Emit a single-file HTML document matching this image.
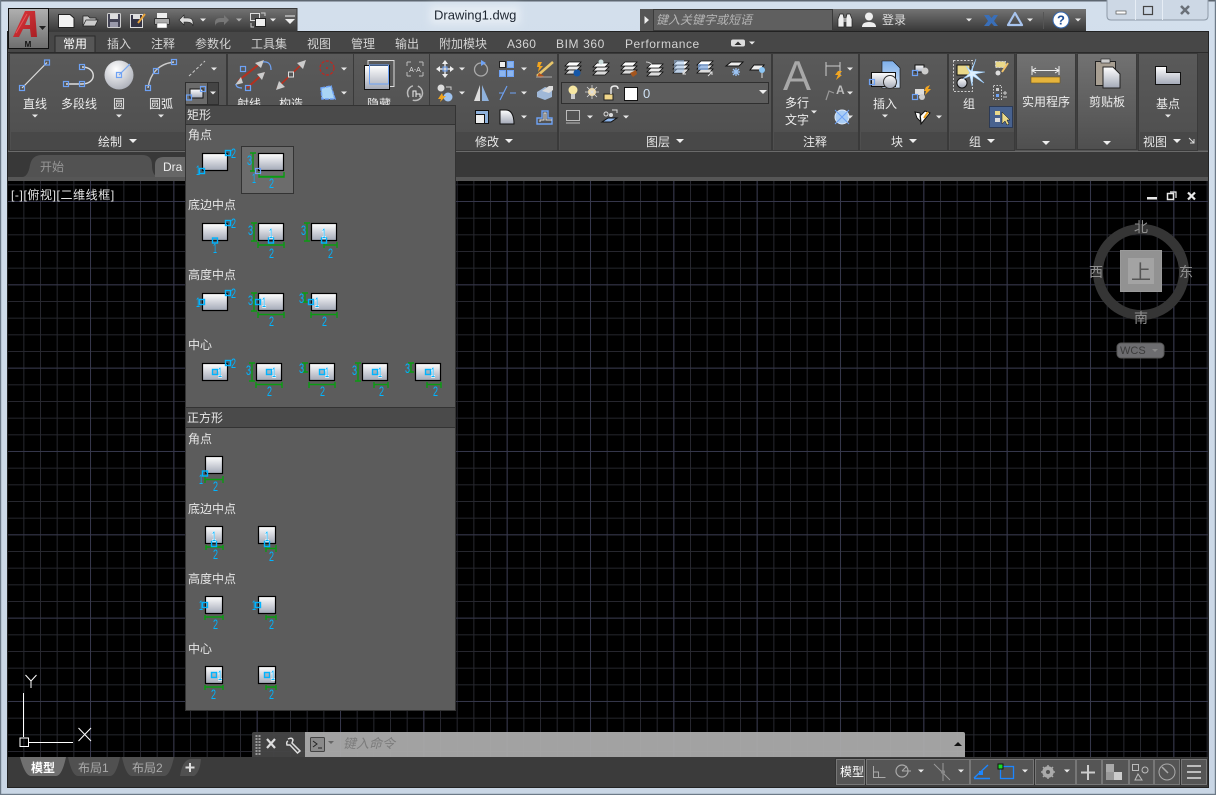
<!DOCTYPE html>
<html lang="zh"><head><meta charset="utf-8"><title>Drawing1.dwg</title>
<style>
html,body{margin:0;padding:0;background:#000;width:1216px;height:795px;overflow:hidden}
svg{display:block}
text{font-family:"Liberation Sans","Noto Sans CJK SC",sans-serif;font-size:12px;fill:#e6e6e6}
.c{text-anchor:middle}
.tab{fill:#d4d4d4}
.n{fill:#00b4ff;font-size:14px}
.w{paint-order:stroke;stroke:#eaf6ff;stroke-width:1.500px}
.g{fill:none;stroke:#0a9c12;stroke-width:1.400}
.lbl{fill:#ececec}
.vc{fill:#909090;font-size:14px;text-anchor:middle}
</style></head><body>
<svg width="1216" height="795" viewBox="0 0 1216 795" xmlns="http://www.w3.org/2000/svg">
<defs>
<linearGradient id="gT" x1="0" y1="0" x2="0" y2="1"><stop offset="0" stop-color="#d3dfec"/><stop offset="1" stop-color="#c9d6e5"/></linearGradient>
<linearGradient id="gQ" x1="0" y1="0" x2="0" y2="1"><stop offset="0" stop-color="#737373"/><stop offset="1" stop-color="#383838"/></linearGradient>
<linearGradient id="gA" x1="0" y1="0" x2="0" y2="1"><stop offset="0" stop-color="#b0b0b0"/><stop offset="1" stop-color="#6e6e6e"/></linearGradient>
<linearGradient id="gP" x1="0" y1="0" x2="0" y2="1"><stop offset="0" stop-color="#5a5a5a"/><stop offset="1" stop-color="#4e4e4e"/></linearGradient>
<linearGradient id="gL" x1="0" y1="0" x2="0" y2="1"><stop offset="0" stop-color="#727272"/><stop offset="1" stop-color="#4f4f4f"/></linearGradient>
<linearGradient id="gS" x1="0" y1="0" x2="0" y2="1"><stop offset="0" stop-color="#ffffff"/><stop offset="1" stop-color="#a3a9b7"/></linearGradient>
<linearGradient id="gB" x1="0" y1="0" x2="0" y2="1"><stop offset="0" stop-color="#7fb0ea"/><stop offset="1" stop-color="#cfe0f5"/></linearGradient>
<linearGradient id="gR" x1="0" y1="0" x2="1" y2="1"><stop offset="0" stop-color="#e0383c"/><stop offset="1" stop-color="#a81f24"/></linearGradient>
<radialGradient id="gC" cx=".4" cy=".3" r=".8"><stop offset="0" stop-color="#fff"/><stop offset="1" stop-color="#a5a9b3"/></radialGradient>
<filter id="bl" x="-20%" y="-50%" width="140%" height="200%"><feGaussianBlur stdDeviation="4"/></filter>
<pattern id="mi" x="6.67" y="1" width="16.667" height="16.667" patternUnits="userSpaceOnUse"><path d="M.5 0V16.667M0 .5H16.667" stroke="#26272e" stroke-width="1" fill="none"/></pattern>
<pattern id="ma" x="6.67" y="34.33" width="83.33" height="83.33" patternUnits="userSpaceOnUse"><path d="M.5 0V83.33M0 .5H83.33" stroke="#35364a" stroke-width="1" fill="none"/></pattern>
<path id="t" d="M-3-1.5H3L0 1.5Z" fill="#e8e8e8"/>
<path id="T" d="M-4-2H4L0 2Z" fill="#eee"/>
<rect id="p" x="-2.5" y="-2.5" width="5" height="5" fill="none" stroke="#6ea2f5" stroke-width="1.2"/>
<rect id="b" x="-2.5" y="-2.5" width="5" height="5" fill="#1c4a66" fill-opacity=".25" stroke="#00b4ff" stroke-width="1.4"/>
<g id="r"><rect x=".5" y=".5" width="25" height="17" fill="url(#gS)" stroke="#000" stroke-width="1.2"/></g>
<g id="s"><rect x=".5" y=".5" width="17" height="17" fill="url(#gS)" stroke="#000" stroke-width="1.2"/></g>
<g id="lay"><path d="M-8 2 4 2 8-2-4-2Z" fill="#eee" stroke="#111" stroke-width=".8"/><path d="M-8 6 4 6 8 2-4 2Z" fill="#ddd" stroke="#111" stroke-width=".8"/><path d="M-8-2 4-2 8-6-4-6Z" fill="#fff" stroke="#111" stroke-width=".8"/></g>
</defs>

<!-- window frame -->
<rect width="1216" height="795" fill="url(#gT)"/>
<rect width="1216" height="1.5" fill="#5d6670"/>
<rect x="0" y="0" width="1.2" height="795" fill="#6d7a88"/>
<rect x="1214.8" y="0" width="1.2" height="795" fill="#6d7a88"/>
<rect y="793.8" width="1216" height="1.2" fill="#6d7a88"/>
<rect x="430" y="6" width="90" height="18" fill="#e6edf4" filter="url(#bl)"/>
<text x="434" y="19.5" style="font-size:13px;fill:#1d2530">Drawing1.dwg</text>

<!-- client -->
<rect x="7.5" y="31.5" width="1201" height="756" fill="#3a3a3a" stroke="#222"/>

<!-- ribbon tab row -->
<rect x="8" y="32" width="1200" height="20" fill="#474747"/>
<rect x="8" y="52" width="1200" height="1" fill="#2b2b2b"/>
<path d="M55 52V36H95V52" fill="#565656" stroke="#2a2a2a"/>
<text x="63" y="48" style="fill:#fff">常用</text>
<text class="tab" x="107" y="48">插入</text>
<text class="tab" x="151" y="48">注释</text>
<text class="tab" x="195" y="48">参数化</text>
<text class="tab" x="251" y="48">工具集</text>
<text class="tab" x="307" y="48">视图</text>
<text class="tab" x="351" y="48">管理</text>
<text class="tab" x="395" y="48">输出</text>
<text class="tab" x="439" y="48">附加模块</text>
<text class="tab" x="507" y="48" style="letter-spacing:.3px">A360</text>
<text class="tab" x="556" y="48" style="letter-spacing:.6px">BIM 360</text>
<text class="tab" x="625" y="48" style="letter-spacing:.55px">Performance</text>
<rect x="731" y="39.5" width="14" height="7" rx="2" fill="#ddd"/><path d="M734.5 45 738 41.500 741.500 45Z" fill="#333"/>
<use href="#t" x="752" y="43"/>

<!-- ribbon body -->
<rect x="8" y="53" width="1200" height="99" fill="#3f3f3f"/>
<rect x="8" y="150.500" width="1200" height="2" fill="#6a6a6a"/>
<g stroke="#3a3a3a" fill="url(#gP)">
<rect x="9.500" y="53.500" width="217" height="97"/>
<rect x="227.500" y="53.500" width="126" height="97"/>
<rect x="353.500" y="53.500" width="76" height="97"/>
<rect x="429.500" y="53.500" width="128" height="97"/>
<rect x="558.500" y="53.500" width="213" height="97"/>
<rect x="772.500" y="53.500" width="86" height="97"/>
<rect x="859.500" y="53.500" width="88" height="97"/>
<rect x="948.500" y="53.500" width="66" height="97"/>
<rect x="1138.500" y="53.500" width="59" height="97"/>
</g>
<rect x="1198" y="53" width="10" height="97" fill="#444"/>
<g fill="#484848">
<rect x="11" y="132" width="215" height="18"/><rect x="229" y="132" width="124" height="18"/><rect x="355" y="132" width="74" height="18"/><rect x="431" y="132" width="126" height="18"/><rect x="560" y="132" width="211" height="18"/><rect x="774" y="132" width="84" height="18"/><rect x="861" y="132" width="86" height="18"/><rect x="950" y="132" width="64" height="18"/><rect x="1140" y="132" width="57" height="18"/>
</g>
<rect x="1016.500" y="53.500" width="59" height="96" fill="url(#gL)" stroke="#3a3a3a"/>
<rect x="1077.500" y="53.500" width="59" height="96" fill="url(#gL)" stroke="#3a3a3a"/>

<!-- draw panel -->
<path d="M22 88 47 62.500" stroke="#ddd" stroke-width="1.200"/><use href="#p" x="22" y="88"/><use href="#p" x="47" y="62.500"/>
<path d="M66 84H82C97 84 97 67 82 67" stroke="#ddd" stroke-width="1.400" fill="none"/><use href="#p" x="66" y="84"/><use href="#p" x="82" y="84"/><use href="#p" x="82" y="67"/>
<circle cx="119" cy="75" r="14.500" fill="url(#gC)"/><path d="M119 75 130 64" stroke="#7aa8ef" stroke-width="1.200"/><use href="#p" x="119" y="75"/>
<path d="M148 88C150 74 158 64 174 62" stroke="#ccc" stroke-width="1.400" fill="none"/><use href="#p" x="148" y="88"/><use href="#p" x="156" y="71"/><use href="#p" x="174" y="62"/>
<path d="M189 76 205 61" stroke="#ccc" stroke-width="1" stroke-dasharray="3 2" fill="none"/><use href="#t" x="214" y="69"/>
<rect x="185.500" y="82.500" width="33" height="22" fill="#444" stroke="#2f2f2f"/><rect x="186" y="83" width="21" height="21" fill="#6b6b6b"/><path d="M207.500 83V104" stroke="#2f2f2f"/>
<rect x="190" y="89" width="13" height="9" fill="url(#gS)" stroke="#111"/><use href="#p" x="189" y="97.500"/><use href="#p" x="203" y="89"/><use href="#t" x="213" y="93"/>
<text class="lbl c" x="35" y="108">直线</text><text class="lbl c" x="79" y="108">多段线</text><text class="lbl c" x="119" y="108">圆</text><text class="lbl c" x="161" y="108">圆弧</text>
<use href="#t" x="35" y="116"/><use href="#t" x="119" y="116"/><use href="#t" x="161" y="116"/>
<text class="c" x="110" y="146">绘制</text><use href="#T" x="133" y="141"/>

<!-- ray etc -->
<path d="M238 81 262 62M247 88 264 73" stroke="#b5301f" stroke-width="2"/>
<path d="M235 85 241 77 243 83ZM264 60 255 63 261 68ZM265 72 257 74 262 80Z" fill="#ccc"/>
<use href="#p" x="243" y="69" /><use href="#p" x="248" y="88"/>
<path d="M263 62Q271 61 271 70M236 84Q236 88 242 88" stroke="#6ea2f5" fill="none" stroke-width="1.200"/>
<path d="M277 88 305 61" stroke="#b5301f" stroke-width="1.600"/><path d="M276 90 279 81 285 87ZM306 60 297 63 303 69Z" fill="#ccc"/><rect x="288.500" y="72" width="5" height="5" fill="#555" stroke="#ddd"/>
<circle cx="327" cy="68" r="7" fill="none" stroke="#c4251e" stroke-dasharray="3 1.500" stroke-width="1.200"/><circle cx="327" cy="68" r="1" fill="#c4251e"/><use href="#t" x="344" y="69"/>
<path d="M321 88 331 86 335 99 322 99Z" fill="#a9d5f5" stroke="#6ea2f5" stroke-width="1.500" stroke-dasharray="4 1"/><use href="#t" x="344" y="93"/>
<text class="lbl c" x="249" y="108">射线</text><text class="lbl c" x="291" y="108">构造</text>

<!-- hide panel -->
<rect x="368" y="60.500" width="26" height="26" fill="none" stroke="#ddd" stroke-width="1"/><rect x="364.500" y="65.500" width="25" height="24" fill="url(#gS)" stroke="#111"/><rect x="369.500" y="65" width="19" height="19" fill="none" stroke="#6ea2f5"/>
<text class="lbl c" x="379" y="108">隐藏</text>
<path d="M407 62V66M407 62H411M423 62V66M423 62H419M407 76V72M407 76H411M423 76V72M423 76H419" stroke="#bbb" fill="none"/><text x="415" y="72" class="c" style="font-size:7px;fill:#ddd">A-A</text>
<circle cx="415" cy="93" r="7.500" fill="none" stroke="#bbb" stroke-width="1.500" stroke-dasharray="14 5"/><path d="M413 97V91H416V97M416 94H420V97" fill="none" stroke="#eee"/>

<!-- modify panel -->
<path d="M445 62V76M438 69H452" stroke="#ddd" stroke-width="1.500"/><path d="M445 60 442 64H448ZM445 78 442 74H448ZM436 69 440 66V72ZM454 69 450 66V72Z" fill="#eee"/><rect x="443" y="67" width="4" height="4" fill="none" stroke="#6ea2f5"/>
<use href="#t" x="462" y="69"/>
<circle cx="481" cy="69.500" r="6.500" fill="none" stroke="#aaa" stroke-width="1.300"/><path d="M481 60 486 63 481 66Z" fill="#6ea2f5"/>
<g stroke="#6ea2f5"><rect x="499.500" y="61.500" width="6" height="6" fill="#eee" stroke="#222"/><rect x="507.500" y="61.500" width="6" height="6" fill="#8db6ee"/><rect x="499.500" y="70.500" width="6" height="6" fill="#8db6ee"/><rect x="507.500" y="70.500" width="6" height="6" fill="#8db6ee"/></g>
<use href="#t" x="524" y="69"/>
<path d="M537 76 553 62" stroke="#e8c66a" stroke-width="2.500"/><path d="M539 73 544 76 541 78 537 77Z" fill="#b5531c"/><path d="M538 62 542 62 540 66 543 66 538 72 539 67 537 67Z" fill="#f2a51e"/><path d="M536 77H552" stroke="#aaa"/>
<circle cx="441" cy="88" r="3.500" fill="#ddd"/><circle cx="448" cy="97" r="4.500" fill="#9fc3ee"/><path d="M438 99 442 93 443 96 446 96 440 102 441 99Z" fill="#f2a51e"/><path d="M446 87H451V90" fill="none" stroke="#ccc"/>
<use href="#t" x="462" y="93"/>
<path d="M480 85V101H474Z" fill="#ddd"/><path d="M482 85V101H489Z" fill="#8fb2dd"/>
<path d="M500 100 507 86M499 93H504M510 93H516" stroke="#6ea2f5" stroke-width="1.100" fill="none"/>
<use href="#t" x="524" y="93"/>
<path d="M537 92 545 87 552 89V97L545 100 537 97Z" fill="#9fb8d8"/><path d="M542 91 549 86H553V90L549 93Z" fill="#ddd"/>
<rect x="475.500" y="110.500" width="13" height="13" fill="#8fb2dd" stroke="#111"/><rect x="475.500" y="114.500" width="9" height="9" fill="#eee" stroke="#111"/>
<path d="M500 110H506C511 110 514 115 514 124H500Z" fill="url(#gS)" stroke="#111"/>
<use href="#t" x="524" y="117"/>
<path d="M537 124V118H542V111H548V118H552V124Z" fill="none" stroke="#6ea2f5" stroke-width="1.400"/><path d="M540 122V120H544V113H546V120H552" fill="none" stroke="#ddd"/>
<text class="c" x="487" y="146">修改</text><use href="#T" x="509" y="141"/>

<!-- layer panel -->
<use href="#lay" x="573" y="68"/><circle cx="577" cy="73" r="3.500" fill="#1557a8"/>
<use href="#lay" x="601" y="69"/><circle cx="601" cy="62" r="2.500" fill="#cdd"/>
<use href="#lay" x="629" y="68"/><path d="M630 73 636 70 637 74 633 77Z" fill="#a5561e"/>
<use href="#lay" x="655" y="70"/><path d="M646 62Q650 62 652 65" fill="none" stroke="#ccc"/>
<use href="#lay" x="681" y="67"/><rect x="674" y="60" width="10" height="13" fill="#9fc3ee" opacity=".5"/><path d="M683 74 687 70M683 71V74H686" fill="none" stroke="#ddd"/>
<use href="#lay" x="705" y="67"/><rect x="698" y="64" width="10" height="6" fill="#7fa9e4" opacity=".7"/><path d="M708 76 712 72M709 72H712V75" fill="none" stroke="#ddd"/>
<path d="M726 66 739 66 743 62 731 62Z" fill="#eee" stroke="#111"/><path d="M736 68V76M732 72H740M733 69 739 75M739 69 733 75" stroke="#9cc4f5" stroke-width="1.300"/>
<path d="M750 70 760 70 764 65 754 65Z" fill="#eee" stroke="#111"/><circle cx="762" cy="70" r="3" fill="#8cc6f5"/><path d="M762 73V78" stroke="#ddd"/>
<rect x="561.500" y="82.500" width="207" height="21" fill="#5d5d5d" stroke="#2f2f2f"/>
<circle cx="573" cy="90" r="4.500" fill="#f7e7a2"/><path d="M571 94H575V99H571Z" fill="#ccc"/>
<circle cx="592" cy="92" r="4" fill="#f5dc9f"/><path d="M592 85V99M585 92H599M587 87 597 97M597 87 587 97" stroke="#ddd" stroke-width=".8"/>
<rect x="604" y="94" width="9" height="6" fill="#f0d68a" stroke="#222"/><path d="M611 94V89Q611 86 615 86 618 86 618 89" fill="none" stroke="#eee" stroke-width="1.400"/>
<rect x="624.500" y="87.500" width="13" height="13" fill="#fff" stroke="#111"/>
<text x="643" y="98" style="fill:#cfe2f5;font-size:13px">0</text>
<use href="#T" x="763" y="92"/>
<rect x="566.500" y="110.500" width="13" height="10" fill="none" stroke="#bbb"/><path d="M566 123H580" stroke="#bbb"/>
<use href="#t" x="590" y="117"/>
<path d="M602 122 611 122 617 118 608 118Z" fill="#8db6ee" stroke="#111"/><circle cx="606" cy="114" r="2" fill="none" stroke="#ddd"/><circle cx="611" cy="115" r="2" fill="#ddd"/><path d="M612 110H617V113" fill="none" stroke="#ddd"/>
<use href="#t" x="626" y="117"/>
<text class="c" x="658" y="146">图层</text><use href="#T" x="680" y="141"/>

<!-- annotation -->
<text class="c" x="797" y="90" style="font-size:42px;fill:#a8a8a8">A</text>
<text class="lbl c" x="797" y="107">多行</text><text class="lbl c" x="797" y="124">文字</text><use href="#t" x="814" y="112"/>
<path d="M826 62V76M840 62V76M826 66H840" stroke="#ccc" fill="none"/><path d="M838 71 842 71 839 75 842 75 836 80 838 75 835 75Z" fill="#f2a51e"/><use href="#t" x="850" y="69"/>
<path d="M826 100 829 91 834 93" stroke="#999" fill="none" stroke-width="1.200"/><text x="836" y="94" style="font-size:12px;font-weight:bold;fill:#bbb">A</text><use href="#t" x="850" y="93"/>
<circle cx="842" cy="117" r="7" fill="#a9cdf5" stroke="#dfeaf8"/><path d="M835 110 849 124M849 110 835 124" stroke="#6ea2f5"/><use href="#t" x="850" y="117"/>
<text class="c" x="815" y="146">注释</text>

<!-- block -->
<path d="M882 61H893L900 68V88H882Z" fill="url(#gB)" stroke="#111" stroke-width=".6"/>
<rect x="871.500" y="72.500" width="24" height="14" fill="url(#gS)" stroke="#111"/><use href="#p" x="872" y="82"/><circle cx="890" cy="82" r="6.500" fill="url(#gS)" stroke="#333"/>
<text class="lbl c" x="885" y="108">插入</text><use href="#t" x="885" y="116"/>
<rect x="915" y="65" width="9" height="7" fill="url(#gS)" stroke="#111"/><circle cx="925" cy="71" r="3.500" fill="#ccc"/><use href="#p" x="915" y="73"/>
<rect x="915" y="89" width="9" height="6" fill="#ddd"/><circle cx="922" cy="97" r="3" fill="#ccc"/><use href="#p" x="915" y="97"/><path d="M926 87 930 85 928 89 931 89 925 95 926 91 924 91Z" fill="#f2a51e"/>
<path d="M915 112 920 113 921 122 917 118Z M921 124 930 113 925 111 920 116Z" fill="#fff" stroke="#111"/><path d="M924 118 928 112" stroke="#f2a51e" stroke-width="2"/>
<use href="#t" x="939" y="117"/>
<text class="c" x="897" y="146">块</text><use href="#T" x="913" y="141"/>

<!-- group -->
<rect x="953.500" y="60.500" width="19" height="31" fill="none" stroke="#ccc" stroke-dasharray="2 1.500"/>
<rect x="957" y="65" width="13" height="10" fill="#ead98a" stroke="#111"/><circle cx="962" cy="83" r="5" fill="url(#gS)" stroke="#111"/>
<path d="M972 71 985 72 975 74 984 83 973 76 972 86 970 76 963 79 970 73 966 66 971 71 976 59Z" fill="#dff1ff" stroke="#9fd0ff" stroke-width=".6"/>
<text class="lbl c" x="969" y="108">组</text>
<rect x="995.500" y="61.500" width="10" height="6" fill="#ead98a" stroke="#ccc" stroke-dasharray="2 1"/><circle cx="998" cy="73" r="2.500" fill="#ddd"/><path d="M1002 72 1008 63" stroke="#f0c36a" stroke-width="2"/>
<rect x="993.500" y="85.500" width="8" height="14" fill="none" stroke="#ccc" stroke-dasharray="1.500 1.500"/><rect x="996" y="88" width="3" height="3" fill="#ccc"/><rect x="996" y="94" width="3" height="3" fill="#6ea2f5"/><path d="M1003 93H1007M1005 91V95M1003 97H1007" stroke="#ccc"/>
<rect x="989.500" y="106.500" width="23" height="21" fill="#48628f" stroke="#2c3a55"/><rect x="995" y="111" width="5" height="4" fill="#ead98a"/><rect x="995" y="118" width="5" height="4" fill="#ddd"/><path d="M1002 112V124L1005 121 1007 125 1009 124 1007 120H1010Z" fill="#ead98a" stroke="#111" stroke-width=".5"/>
<text class="c" x="975" y="146">组</text><use href="#T" x="991" y="141"/>

<!-- utility -->
<path d="M1032 66V75M1059 66V75M1032 70.500H1059M1036 68 1032 70.500 1036 73M1055 68 1059 70.500 1055 73" fill="none" stroke="#eee"/>
<rect x="1031" y="77" width="29" height="6" fill="#e6b43c" stroke="#6e551c" stroke-width=".6"/>
<text class="lbl c" x="1046" y="106">实用程序</text><use href="#T" x="1046" y="143"/>
<rect x="1095.500" y="61.500" width="20" height="24" fill="#a89f92" stroke="#222"/><rect x="1101" y="59" width="9" height="4" fill="#ccc" stroke="#222" stroke-width=".6"/>
<path d="M1103 67H1113L1120 74V88H1103Z" fill="url(#gS)" stroke="#222"/>
<text class="lbl c" x="1107" y="106">剪贴板</text><use href="#T" x="1107" y="143"/>
<!-- view -->
<path d="M1155.500 66.500H1166.500V72.500H1180.500V84.500H1155.500Z" fill="url(#gS)" stroke="#111"/>
<text class="lbl c" x="1168" y="108">基点</text><use href="#t" x="1168" y="116"/>
<text class="c" x="1155" y="146">视图</text><use href="#T" x="1177" y="141"/><path d="M1189 138 1194 143M1194 139V143H1190" stroke="#ddd" fill="none"/>

<!-- doc tab row -->
<rect x="8" y="152" width="1200" height="25" fill="#383838"/>
<rect x="8" y="177" width="1200" height="4" fill="#565656"/>
<path d="M8 177H22Q28 177 30 165 32 155 42 155H142Q152 155 152 165 152 177 160 177Z" fill="#525252"/>
<path d="M155 177V165Q155 157 164 157H190V177Z" fill="#666"/>
<text x="40" y="171" style="fill:#969696;font-size:12px">开始</text>
<text x="163" y="171" style="fill:#eee;font-size:12px">Dra</text>

<!-- drawing area -->
<rect x="8" y="181" width="1200" height="576" fill="#000"/>
<rect x="8" y="181" width="1200" height="576" fill="url(#mi)"/>
<rect x="8" y="181" width="1200" height="576" fill="url(#ma)"/>
<text x="11" y="199" style="fill:#e4e4e4;letter-spacing:.6px">[-][俯视][二维线框]</text>

<!-- viewport controls -->
<rect x="1147" y="197" width="10" height="2.500" fill="#e8e8e8"/>
<rect x="1167.500" y="193.500" width="6" height="6" fill="none" stroke="#e8e8e8" stroke-width="1.500"/><path d="M1170 192H1176V198" fill="none" stroke="#e8e8e8" stroke-width="1.200"/>
<path d="M1188 192.500 1195 199.500M1195 192.500 1188 199.500" stroke="#e8e8e8" stroke-width="2.200"/>

<!-- viewcube -->
<circle cx="1141" cy="272" r="43" fill="none" stroke="#353535" stroke-width="10"/>
<rect x="1120.500" y="250.500" width="41" height="41" fill="#929292" stroke="#9a9a9a"/>
<rect x="1128" y="258" width="26" height="26" fill="#a3a3a3"/>
<text class="c" x="1141" y="279" style="font-size:20px;fill:#555">上</text>
<text class="vc" x="1141" y="232">北</text><text class="vc" x="1186" y="277">东</text><text class="vc" x="1141" y="323">南</text><text class="vc" x="1096" y="277">西</text>
<rect x="1117" y="343" width="47" height="15" rx="4" fill="#6d6d70" stroke="#555"/>
<text x="1120" y="354" style="font-size:11px;fill:#3c3c3c">WCS</text><path d="M1152 349H1158L1155 352Z" fill="#8a8a8a"/>

<!-- UCS -->
<path d="M23.500 693V737M29 742.500H73" stroke="#fff" fill="none" stroke-width="1"/>
<path d="M31 688V681M31 681 25.500 675M31 681 36.500 675" stroke="#fff" fill="none"/>
<rect x="20" y="738" width="8.500" height="8.500" fill="none" stroke="#fff"/>
<path d="M78.500 728 91 741M91 728 78.500 741" stroke="#fff"/>

<!-- popup -->
<rect x="185.500" y="105.500" width="270" height="605" fill="#5c5c5c" stroke="#333"/>
<rect x="186" y="106" width="269" height="18" fill="#4a4a4a"/><path d="M186 124.500H455" stroke="#333"/>
<text x="187" y="119">矩形</text>
<text x="188" y="139">角点</text>
<rect x="241.500" y="146.500" width="52" height="47" fill="#6c6c6c" stroke="#333"/>
<text x="188" y="209">底边中点</text><text x="188" y="279">高度中点</text><text x="188" y="349">中心</text>
<rect x="186" y="408" width="269" height="19" fill="#4a4a4a"/><path d="M186 407.500H455M186 427.500H455" stroke="#333"/>
<text x="187" y="422">正方形</text>
<text x="188" y="443">角点</text><text x="188" y="513">底边中点</text><text x="188" y="583">高度中点</text><text x="188" y="653">中心</text>

<!-- row 1 -->
<use href="#r" x="202" y="153"/><use href="#b" x="228" y="153"/><use href="#b" x="202" y="171"/>
<text class="n" x="231" y="158" textLength="5" lengthAdjust="spacingAndGlyphs">2</text><text class="n" x="196" y="175" textLength="4" lengthAdjust="spacingAndGlyphs">1</text>
<use href="#r" x="258" y="153"/><path class="g" d="M253 153V171M250 153H256M250 171H256M259 172V177H284V172M259 176.500H284"/><use href="#p" x="258" y="171"/>
<text class="n" x="247" y="165" textLength="5" lengthAdjust="spacingAndGlyphs">3</text><text class="n" x="252" y="183" textLength="4" lengthAdjust="spacingAndGlyphs">1</text><text class="n" x="269" y="188" textLength="5" lengthAdjust="spacingAndGlyphs">2</text>
<!-- row 2 -->
<use href="#r" x="202" y="223"/><use href="#b" x="215" y="240.500"/><use href="#b" x="228" y="223"/>
<text class="n" x="213" y="253" textLength="4" lengthAdjust="spacingAndGlyphs">1</text><text class="n" x="231" y="228" textLength="5" lengthAdjust="spacingAndGlyphs">2</text>
<use href="#r" x="258" y="223"/><path class="g" d="M254 223V241M251 223H257M251 241H257M258 242V248M284 242V248M258 245H284"/><use href="#b" x="271" y="240.500"/>
<text class="n" x="248" y="235" textLength="5" lengthAdjust="spacingAndGlyphs">3</text><text class="n w" x="269" y="238" textLength="4" lengthAdjust="spacingAndGlyphs">1</text><text class="n" x="269" y="258" textLength="5" lengthAdjust="spacingAndGlyphs">2</text>
<use href="#r" x="311" y="223"/><path class="g" d="M307 223V241M304 223H310M304 241H310M324 242V248M337 242V248M324 245H337"/><use href="#b" x="324" y="240.500"/>
<text class="n" x="301" y="235" textLength="5" lengthAdjust="spacingAndGlyphs">3</text><text class="n w" x="322" y="238" textLength="4" lengthAdjust="spacingAndGlyphs">1</text><text class="n" x="328" y="258" textLength="5" lengthAdjust="spacingAndGlyphs">2</text>
<!-- row 3 -->
<use href="#r" x="202" y="293"/><use href="#b" x="202" y="302"/><use href="#b" x="228" y="293"/>
<text class="n" x="196" y="307" textLength="4" lengthAdjust="spacingAndGlyphs">1</text><text class="n" x="231" y="298" textLength="5" lengthAdjust="spacingAndGlyphs">2</text>
<use href="#r" x="258" y="293"/><path class="g" d="M254 293V311M251 293H257M251 311H257M258 312V318M284 312V318M258 314.500H284"/><use href="#b" x="258" y="302"/>
<text class="n" x="248" y="305" textLength="5" lengthAdjust="spacingAndGlyphs">3</text><text class="n w" x="262" y="307" textLength="4" lengthAdjust="spacingAndGlyphs">1</text><text class="n" x="269" y="326" textLength="5" lengthAdjust="spacingAndGlyphs">2</text>
<use href="#r" x="311" y="293"/><path class="g" d="M305 293V302M302 293H308M302 302H308M311 312V318M337 312V318M311 314.500H337"/><use href="#b" x="311" y="302"/>
<text class="n" x="299" y="303" textLength="5" lengthAdjust="spacingAndGlyphs">3</text><text class="n w" x="315" y="307" textLength="4" lengthAdjust="spacingAndGlyphs">1</text><text class="n" x="322" y="326" textLength="5" lengthAdjust="spacingAndGlyphs">2</text>
<!-- row 4 -->
<use href="#r" x="202" y="363"/><use href="#b" x="215" y="372"/><use href="#b" x="228" y="363"/>
<text class="n w" x="218" y="377" textLength="4" lengthAdjust="spacingAndGlyphs">1</text><text class="n" x="231" y="368" textLength="5" lengthAdjust="spacingAndGlyphs">2</text>
<use href="#r" x="256" y="363"/><path class="g" d="M252 363V381M249 363H255M249 381H255M256 382V388M282 382V388M256 384.500H282"/><use href="#b" x="269" y="372"/>
<text class="n" x="246" y="375" textLength="5" lengthAdjust="spacingAndGlyphs">3</text><text class="n w" x="272" y="377" textLength="4" lengthAdjust="spacingAndGlyphs">1</text><text class="n" x="267" y="396" textLength="5" lengthAdjust="spacingAndGlyphs">2</text>
<use href="#r" x="309" y="363"/><path class="g" d="M305 363V372M302 363H308M302 372H308M309 382V388M335 382V388M309 384.500H335"/><use href="#b" x="322" y="372"/>
<text class="n" x="299" y="373" textLength="5" lengthAdjust="spacingAndGlyphs">3</text><text class="n w" x="325" y="377" textLength="4" lengthAdjust="spacingAndGlyphs">1</text><text class="n" x="320" y="396" textLength="5" lengthAdjust="spacingAndGlyphs">2</text>
<use href="#r" x="362" y="363"/><path class="g" d="M358 363V381M355 363H361M355 381H361M374 382V388M388 382V388M374 384.500H388"/><use href="#b" x="375" y="372"/>
<text class="n" x="352" y="375" textLength="5" lengthAdjust="spacingAndGlyphs">3</text><text class="n w" x="378" y="377" textLength="4" lengthAdjust="spacingAndGlyphs">1</text><text class="n" x="379" y="396" textLength="5" lengthAdjust="spacingAndGlyphs">2</text>
<use href="#r" x="415" y="363"/><path class="g" d="M411 363V372M408 363H414M408 372H414M427 382V388M441 382V388M427 384.500H441"/><use href="#b" x="428" y="372"/>
<text class="n" x="405" y="373" textLength="5" lengthAdjust="spacingAndGlyphs">3</text><text class="n w" x="431" y="377" textLength="4" lengthAdjust="spacingAndGlyphs">1</text><text class="n" x="433" y="396" textLength="5" lengthAdjust="spacingAndGlyphs">2</text>

<!-- squares -->
<use href="#s" x="205" y="456"/><path class="g" d="M205 476V483M223 476V483M205 479.500H223"/><use href="#b" x="205" y="473.500"/>
<text class="n" x="199" y="484" textLength="4" lengthAdjust="spacingAndGlyphs">1</text><text class="n" x="213" y="491" textLength="5" lengthAdjust="spacingAndGlyphs">2</text>
<use href="#s" x="205" y="526"/><path class="g" d="M206 545V550M223 545V550M206 547H223"/><use href="#b" x="214" y="544"/>
<text class="n w" x="212" y="541" textLength="4" lengthAdjust="spacingAndGlyphs">1</text><text class="n" x="213" y="559" textLength="5" lengthAdjust="spacingAndGlyphs">2</text>
<use href="#s" x="258" y="526"/><path class="g" d="M266 545V552M276 545V552M266 548.500H276"/><use href="#b" x="267" y="544"/>
<text class="n w" x="265" y="541" textLength="4" lengthAdjust="spacingAndGlyphs">1</text><text class="n" x="269" y="561" textLength="5" lengthAdjust="spacingAndGlyphs">2</text>
<use href="#s" x="205" y="596"/><path class="g" d="M205 615V620M223 615V620M205 617H223"/><use href="#b" x="205" y="605"/>
<text class="n" x="199" y="610" textLength="4" lengthAdjust="spacingAndGlyphs">1</text><text class="n" x="213" y="629" textLength="5" lengthAdjust="spacingAndGlyphs">2</text>
<use href="#s" x="258" y="596"/><path class="g" d="M266 615V620M276 615V620M266 617H276"/><use href="#b" x="258" y="605"/>
<text class="n" x="252" y="610" textLength="4" lengthAdjust="spacingAndGlyphs">1</text><text class="n" x="269" y="629" textLength="5" lengthAdjust="spacingAndGlyphs">2</text>
<use href="#s" x="205" y="666"/><path class="g" d="M205 685V690M223 685V690M205 687H223"/><use href="#b" x="214" y="675"/>
<text class="n w" x="218" y="680" textLength="4" lengthAdjust="spacingAndGlyphs">1</text><text class="n" x="211" y="699" textLength="5" lengthAdjust="spacingAndGlyphs">2</text>
<use href="#s" x="258" y="666"/><path class="g" d="M266 685V690M276 685V690M266 687H276"/><use href="#b" x="267" y="675"/>
<text class="n w" x="271" y="680" textLength="4" lengthAdjust="spacingAndGlyphs">1</text><text class="n" x="269" y="699" textLength="5" lengthAdjust="spacingAndGlyphs">2</text>

<!-- command line -->
<path d="M305 732H254Q252 732 252 734V757H305Z" fill="#474747" fill-opacity=".93"/>
<path d="M305 732H963Q965 732 965 734V757H305Z" fill="#ababab" fill-opacity=".95"/>
<path d="M256.500 735V755M259.500 735V755" stroke="#999" stroke-width="2" stroke-dasharray="2 1"/>
<path d="M267 739 275 748M275 739 267 748" stroke="#ddd" stroke-width="2.200"/>
<path d="M288 739Q292 737 293 740L292 743 300 751 297.500 753 290 745 287 745Q286 742 288 741" fill="none" stroke="#ddd" stroke-width="1.500"/>
<rect x="310.500" y="737.500" width="14" height="14" rx="1" fill="#8a8a8a" stroke="#444"/><path d="M313 741 317 744 313 747M318 748H322" stroke="#222" fill="none"/>
<path d="M328 741H334L331 744Z" fill="#666"/>
<text x="343" y="748" style="font-size:13px;font-style:italic;fill:#7c7c7c">键入命令</text>
<path d="M954 746H962L958 742Z" fill="#111"/>

<!-- bottom bar -->
<rect x="8" y="757" width="1200" height="30" fill="#3b3b3b"/>
<path d="M20 757Q25 776 31 776H56Q62 776 66 757Z" fill="#707070"/>
<path d="M68 757Q72 776 78 776H110Q116 776 120 757Z" fill="#505050"/>
<path d="M122 757Q126 776 132 776H164Q170 776 174 757Z" fill="#505050"/>
<path d="M180 776Q182 761 190 759H201Q200 772 194 776Z" fill="#505050"/>
<text x="31" y="772" style="fill:#fff;font-weight:bold">模型</text>
<text x="78" y="772" style="fill:#aaa">布局1</text><text x="132" y="772" style="fill:#aaa">布局2</text>
<path d="M190 763V772M185.500 767.500H194.500" stroke="#ddd" stroke-width="2"/>

<!-- status -->
<rect x="835" y="758" width="373" height="27" fill="#333"/>
<g fill="#555" stroke="#777">
<rect x="836.500" y="759.500" width="28" height="25"/><rect x="866.500" y="759.500" width="103" height="25"/><rect x="970.500" y="759.500" width="63" height="25"/><rect x="1035.500" y="759.500" width="40" height="25"/><rect x="1076.500" y="759.500" width="25" height="25"/><rect x="1102.500" y="759.500" width="26" height="25"/><rect x="1129.500" y="759.500" width="24" height="25"/><rect x="1154.500" y="759.500" width="25" height="25"/><rect x="1181.500" y="759.500" width="25" height="25"/>
</g>
<text x="840" y="776" style="fill:#fff">模型</text>
<path d="M873.500 766V777.500H885.500M873.500 772H878.500V777" fill="none" stroke="#aaa"/>
<circle cx="902" cy="771" r="6" fill="none" stroke="#aaa" stroke-width="1.200"/><path d="M902 771H911M902 771 907 766" stroke="#aaa"/><use href="#t" x="921" y="771"/>
<path d="M934 764 950 780M943 763V781" stroke="#999"/><circle cx="943" cy="772" r="2" fill="#888"/><use href="#t" x="961" y="771"/>
<path d="M974 778 988 765M974 778.500H990" stroke="#1c86ff" stroke-width="1.400" fill="none"/><rect x="979" y="771" width="4" height="4" fill="#1c86ff"/>
<rect x="1000.500" y="766.500" width="13" height="12" fill="none" stroke="#1c86ff" stroke-width="1.300"/><rect x="998" y="764" width="5" height="5" fill="#1adb28" stroke="#111"/>
<use href="#t" x="1025" y="771"/>
<circle cx="1048" cy="772" r="4" fill="none" stroke="#aaa" stroke-width="3.500"/><path d="M1048 765V779M1041 772H1055M1043 767 1053 777M1053 767 1043 777" stroke="#aaa" stroke-width="1.500"/><circle cx="1048" cy="772" r="2" fill="#555"/><use href="#t" x="1067" y="771"/>
<path d="M1088 765V780M1081 772.500H1095" stroke="#ccc" stroke-width="2"/>
<rect x="1106" y="764" width="8" height="8" fill="#aaa"/><rect x="1106" y="772" width="8" height="8" fill="#999"/><rect x="1114" y="772" width="8" height="8" fill="#ccc"/>
<rect x="1132.500" y="764.500" width="6" height="6" fill="none" stroke="#bbb"/><circle cx="1145" cy="770" r="3" fill="none" stroke="#bbb"/><path d="M1135 780 1138 774 1142 780Z" fill="none" stroke="#bbb"/>
<circle cx="1167" cy="772" r="8" fill="none" stroke="#aaa"/><path d="M1162 767 1168 773" stroke="#aaa" stroke-width="1.500"/>
<path d="M1187 766H1201M1187 772H1201M1187 778H1201" stroke="#ccc" stroke-width="1.800"/>

<!-- QAT -->
<rect x="48" y="8.500" width="249" height="23" fill="url(#gQ)" stroke="#3a3a3a"/>
<path d="M58.500 14.500H70L74 18V27.500H58.500Z" fill="#f2f2f2" stroke="#222"/>
<path d="M83 16H88L90 18H96V20H86L83 26Z M83 26 86 20H98L95 26Z" fill="#ccc" stroke="#222" stroke-width=".7"/>
<rect x="107.500" y="13.500" width="13" height="14" rx="1" fill="#445" stroke="#ccc"/><rect x="110" y="14" width="8" height="5" fill="#ddd"/><rect x="110" y="22" width="8" height="5" fill="#99a"/>
<rect x="130.500" y="14.500" width="12" height="13" fill="#334" stroke="#ddd"/><rect x="133" y="15" width="7" height="4" fill="#ddd"/><path d="M138 23 145 14" stroke="#e8a33a" stroke-width="2"/>
<rect x="157" y="13" width="10" height="5" fill="#eee"/><rect x="154.500" y="18.500" width="15" height="6" rx="1" fill="#aaa" stroke="#333"/><rect x="157" y="23" width="10" height="5" fill="#fff" stroke="#555" stroke-width=".5"/>
<path d="M179 20 184 15V18H188Q193 18 193 23V26Q192 22 187 22H184V25Z" fill="#ddd" stroke="#222" stroke-width=".6"/>
<use href="#t" x="203" y="20"/>
<path d="M229 20 224 15V18H220Q215 18 215 23V26Q216 22 221 22H224V25Z" fill="#777"/>
<use href="#t" x="239" y="20" opacity=".6"/>
<rect x="250.500" y="13.500" width="9" height="7" fill="#555" stroke="#ddd"/><rect x="255.500" y="18.500" width="10" height="8" fill="#eee" stroke="#222"/><path d="M261 13H265V16M251 23V27H254" stroke="#ccc" fill="none"/>
<use href="#t" x="273" y="20"/>
<path d="M285 16H295" stroke="#eee"/><path d="M285 19H295L290 24Z" fill="#eee"/>

<!-- app button -->
<rect x="8.500" y="8.500" width="40" height="40" fill="url(#gA)" stroke="#111"/>
<path d="M13 37 25 11H35L37 37H31L30 29H23L19 37Z M25 25H30L29.500 15Z" fill="url(#gR)" fill-rule="evenodd"/>
<path d="M16 33 27 14" stroke="#e4575b" stroke-width="1"/>
<path d="M39 26H46L42.500 30Z" fill="#222"/>
<text class="c" x="28" y="47" style="font-size:8px;font-weight:bold;fill:#111">M</text>

<!-- search -->
<rect x="640" y="9" width="13" height="22" fill="#555"/><path d="M644.500 16 649 20 644.500 24Z" fill="#eee"/>
<rect x="653.500" y="9.500" width="179" height="21" fill="#5f5f5f" stroke="#3a3a3a"/>
<text x="656" y="24" style="font-style:italic;fill:#b4b4b4">键入关键字或短语</text>
<rect x="833" y="9" width="253" height="22" fill="url(#gQ)"/>
<path d="M838 27V19L840 14H843L844 18V27ZM846 27V18L847 14H850L852 19V27Z" fill="#eee" stroke="#222" stroke-width=".7"/><rect x="843.500" y="18" width="3" height="4" fill="#999"/>
<circle cx="869" cy="16.500" r="4" fill="#eee"/><path d="M862 27Q862 22 869 22 876 22 876 27Z" fill="#eee"/>
<text x="882" y="24" style="fill:#ddd">登录</text>
<use href="#t" x="969" y="20"/>
<path d="M984 15H989L991.500 18 994 15H998L994 21 998 26H994L991.500 23 989 26H984L988 21Z" fill="#3a6fb8"/>
<path d="M1015 13 1022 25H1008Z" fill="none" stroke="#a8c4ee" stroke-width="2.200" stroke-linejoin="round"/><use href="#t" x="1030" y="20"/>
<path d="M1043.500 12V29" stroke="#555"/>
<circle cx="1061" cy="20" r="8" fill="#fff" stroke="#3468b0" stroke-width="1"/><text class="c" x="1061" y="24.500" style="font-size:13px;font-weight:bold;fill:#1d4f9a">?</text>
<use href="#t" x="1078" y="20"/>

<!-- window buttons -->
<path d="M1107 0V16Q1107 20 1111 20H1204Q1208 20 1208 16V0" fill="#cdd8e5" stroke="#8e9aa8"/>
<path d="M1135.500 0V20M1162.500 0V20" stroke="#e6edf5"/>
<rect x="1116" y="11" width="10" height="3" fill="#fff" stroke="#555" stroke-width=".7"/>
<rect x="1143.500" y="6.500" width="9" height="8" fill="none" stroke="#444" stroke-width="1.200"/>
<path d="M1181 6 1189 14M1189 6 1181 14" stroke="#6a7078" stroke-width="2.600"/>
</svg>
</body></html>
